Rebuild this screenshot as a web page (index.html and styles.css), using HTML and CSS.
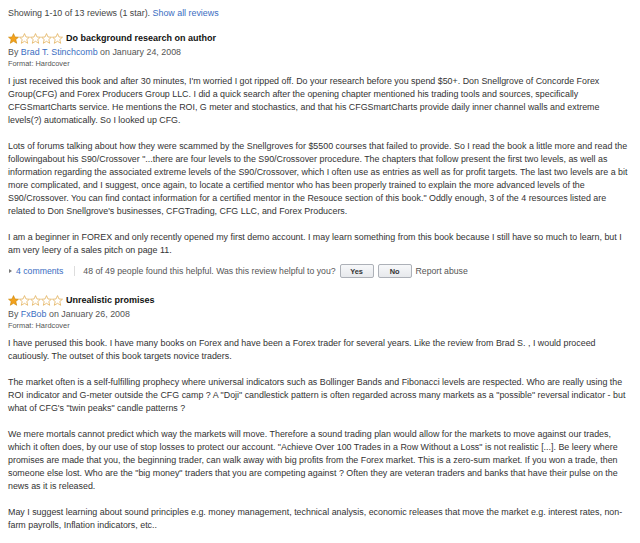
FILE: index.html
```html
<!DOCTYPE html>
<html>
  <head>
    <meta charset="UTF-8">
    <title>Customer Reviews</title>
    <link rel="stylesheet" href="styles.css">
  </head>
<body>
	<div class="summary">
		Showing 1-10 of 13 reviews (1 star). <a href="#">Show all reviews</a>
	</div>

	<div class="review">
		<div class="review-title">
			<svg class="stars" width="55" height="11" viewBox="0 0 55 11">
				<polygon class="star-on" points="5.5,0.6 7,4 10.5,4.2 7.8,6.5 8.7,10.3 5.5,8.3 2.3,10.3 3.2,6.5 0.5,4.2 4,4"/>
				<polygon class="star-off" transform="translate(11 0)" points="5.5,0.6 7,4 10.5,4.2 7.8,6.5 8.7,10.3 5.5,8.3 2.3,10.3 3.2,6.5 0.5,4.2 4,4"/>
				<polygon class="star-off" transform="translate(22 0)" points="5.5,0.6 7,4 10.5,4.2 7.8,6.5 8.7,10.3 5.5,8.3 2.3,10.3 3.2,6.5 0.5,4.2 4,4"/>
				<polygon class="star-off" transform="translate(33 0)" points="5.5,0.6 7,4 10.5,4.2 7.8,6.5 8.7,10.3 5.5,8.3 2.3,10.3 3.2,6.5 0.5,4.2 4,4"/>
				<polygon class="star-off" transform="translate(44 0)" points="5.5,0.6 7,4 10.5,4.2 7.8,6.5 8.7,10.3 5.5,8.3 2.3,10.3 3.2,6.5 0.5,4.2 4,4"/>
			</svg>
			<b>Do background research on author</b>
		</div>
		<div class="review-byline">By <a href="#">Brad T. Stinchcomb</a> on January 24, 2008</div>
		<div class="review-format">Format: Hardcover</div>
		<div class="review-text">
			I just received this book and after 30 minutes, I'm worried I got ripped off. Do your research before you spend $50+. Don Snellgrove of Concorde Forex Group(CFG) and Forex Producers Group LLC. I did a quick search after the opening chapter mentioned his trading tools and sources, specifically CFGSmartCharts service. He mentions the ROI, G meter and stochastics, and that his CFGSmartCharts provide daily inner channel walls and extreme levels(?) automatically. So I looked up CFG.<br><br>
			Lots of forums talking about how they were scammed by the Snellgroves for $5500 courses that failed to provide. So I read the book a little more and read the followingabout his S90/Crossover "...there are four levels to the S90/Crossover procedure. The chapters that follow present the first two levels, as well as information regarding the associated extreme levels of the S90/Crossover, which I often use as entries as well as for profit targets. The last two levels are a bit more complicated, and I suggest, once again, to locate a certified mentor who has been properly trained to explain the more advanced levels of the S90/Crossover. You can find contact information for a certified mentor in the Resouce section of this book." Oddly enough, 3 of the 4 resources listed are related to Don Snellgrove's businesses, CFGTrading, CFG LLC, and Forex Producers.<br><br>
			I am a beginner in FOREX and only recently opened my first demo account. I may learn something from this book because I still have so much to learn, but I am very leery of a sales pitch on page 11.
		</div>
		<div class="review-helpful">
			<span class="arrow"></span>
			<a href="#">4 comments</a>
			<span class="sep"></span>
			<span>48 of 49 people found this helpful. Was this review helpful to you?</span>
			<button class="vote">Yes</button>
			<button class="vote">No</button>
			<span>Report abuse</span>
		</div>
	</div>

	<div class="review">
		<div class="review-title">
			<svg class="stars" width="55" height="11" viewBox="0 0 55 11">
				<polygon class="star-on" points="5.5,0.6 7,4 10.5,4.2 7.8,6.5 8.7,10.3 5.5,8.3 2.3,10.3 3.2,6.5 0.5,4.2 4,4"/>
				<polygon class="star-off" transform="translate(11 0)" points="5.5,0.6 7,4 10.5,4.2 7.8,6.5 8.7,10.3 5.5,8.3 2.3,10.3 3.2,6.5 0.5,4.2 4,4"/>
				<polygon class="star-off" transform="translate(22 0)" points="5.5,0.6 7,4 10.5,4.2 7.8,6.5 8.7,10.3 5.5,8.3 2.3,10.3 3.2,6.5 0.5,4.2 4,4"/>
				<polygon class="star-off" transform="translate(33 0)" points="5.5,0.6 7,4 10.5,4.2 7.8,6.5 8.7,10.3 5.5,8.3 2.3,10.3 3.2,6.5 0.5,4.2 4,4"/>
				<polygon class="star-off" transform="translate(44 0)" points="5.5,0.6 7,4 10.5,4.2 7.8,6.5 8.7,10.3 5.5,8.3 2.3,10.3 3.2,6.5 0.5,4.2 4,4"/>
			</svg>
			<b>Unrealistic promises</b>
		</div>
		<div class="review-byline">By <a href="#">FxBob</a> on January 26, 2008</div>
		<div class="review-format">Format: Hardcover</div>
		<div class="review-text">
			I have perused this book. I have many books on Forex and have been a Forex trader for several years. Like the review from Brad S. , I would proceed cautiously. The outset of this book targets novice traders.<br><br>
			The market often is a self-fulfilling prophecy where universal indicators such as Bollinger Bands and Fibonacci levels are respected. Who are really using the ROI indicator and G-meter outside the CFG camp ? A "Doji" candlestick pattern is often regarded across many markets as a "possible" reversal indicator - but what of CFG's "twin peaks" candle patterns ?<br><br>
			We mere mortals cannot predict which way the markets will move. Therefore a sound trading plan would allow for the markets to move against our trades, which it often does, by our use of stop losses to protect our account. "Achieve Over 100 Trades in a Row Without a Loss" is not realistic [...]. Be leery where promises are made that you, the beginning trader, can walk away with big profits from the Forex market. This is a zero-sum market. If you won a trade, then someone else lost. Who are the "big money" traders that you are competing against ? Often they are veteran traders and banks that have their pulse on the news as it is released.<br><br>
			May I suggest learning about sound principles e.g. money management, technical analysis, economic releases that move the market e.g. interest rates, non-farm payrolls, Inflation indicators, etc..
		</div>
	</div>
</body>
</html>
```

FILE: styles.css
```css
body{
	margin:0;
	padding:7px 8px;
	width:624px;
	font-family:"Liberation Sans",Arial,sans-serif;
	font-size:8.9px;
	line-height:13px;
	color:#333;
	background:#fff;
}
a{
	color:#3a6ec2;
	text-decoration:none;
}
.summary{
	color:#444;
}
.review{
	padding-top:12px;
}
.review-title{
	display:flex;
	align-items:center;
	gap:3px;
	color:#111;
	font-size:9px;
}
.stars{
	display:block;
}
.star-on{
	fill:#f3a21d;
	stroke:#c98300;
	stroke-width:0.6;
}
.star-off{
	fill:#fff;
	stroke:#e0a847;
	stroke-width:0.7;
}
.review-byline{
	margin-top:1px;
	color:#555;
}
.review-format{
	font-size:7.4px;
	line-height:10px;
	color:#555;
	margin-bottom:5.5px;
}
.review-helpful{
	display:flex;
	align-items:center;
	height:16px;
	margin:6.5px 0 3px;
	font-size:8.7px;
	color:#555;
}
.arrow{
	width:0;
	height:0;
	margin:0 4px 0 1px;
	border-left:3px solid #777;
	border-top:2.5px solid transparent;
	border-bottom:2.5px solid transparent;
}
.sep{
	width:1px;
	height:10px;
	background:#ddd;
	margin:0 8px 0 11px;
}
.vote{
	width:34px;
	height:14px;
	margin:0 0 0 4px;
	padding:0;
	font-family:"Liberation Sans",Arial,sans-serif;
	font-size:7.4px;
	font-weight:bold;
	color:#333;
	border:1px solid #adb1b8;
	border-radius:2px;
	background:linear-gradient(#f7f8fa,#e7e9ec);
}
.vote + span{
	margin-left:4px;
}
```
